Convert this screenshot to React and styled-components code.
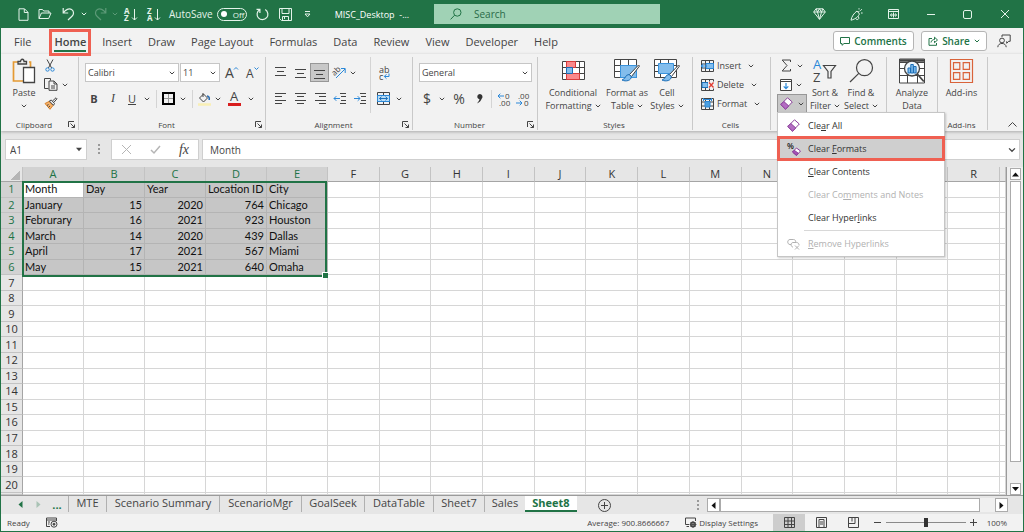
import React from 'react'
import styled, { createGlobalStyle, css } from 'styled-components'

const GREEN = '#217346'
const RED = '#ef6052'
const UI_FONT = '"Open Sans", "Noto Sans", sans-serif'
const CELL_FONT = 'Lato, "Open Sans", sans-serif'

const GlobalStyle = createGlobalStyle`
  * {
    box-sizing: border-box;
  }
  body {
    margin: 0;
    font-family: ${UI_FONT};
    font-size: 11px;
    color: #444;
  }
  button, input, select {
    font: inherit;
    color: inherit;
    margin: 0;
    padding: 0;
    border: 0;
    background: none;
  }
`

const Window = styled.div`
  display: flex;
  flex-direction: column;
  height: 100vh;
  overflow: hidden;
  background: #e6e6e6;
  border: 1px solid ${GREEN};
  border-top: 0;
`

const Svg = styled.svg.attrs(p => ({
  fill: 'none',
  stroke: p.stroke || 'currentColor',
}))`
  display: block;
  flex: none;
  overflow: visible;
  text {
    fill: ${p => p.$ink || 'currentColor'};
    stroke: none;
    font-family: ${UI_FONT};
  }
`

/* ---------- title bar ---------- */

const TitleBar = styled.header`
  display: grid;
  grid-template-columns: 433px 226px 1fr;
  align-items: center;
  height: 28px;
  flex: none;
  background: ${GREEN};
  color: #e4f3ea;
`
const QuickAccess = styled.div`
  display: flex;
  align-items: center;
  padding-left: 10px;
`
const Tool = styled.button`
  display: flex;
  align-items: center;
  justify-content: center;
  flex: none;
  width: ${p => p.$w || 20}px;
  height: 19px;
  line-height: 19px;
  opacity: ${p => (p.$faded ? 0.3 : 1)};
  ${p => p.$pressed && css`
    background: #c8c8c8;
    border: 1px solid #979797;
  `}
`
const AutoSave = styled.label`
  display: flex;
  align-items: center;
  gap: 4px;
  margin-left: 6px;
  font-size: 10px;
`
const Toggle = styled.span`
  display: flex;
  align-items: center;
  gap: 6px;
  width: 30px;
  height: 13px;
  padding-left: 3px;
  border: 1px solid #e4f3ea;
  border-radius: 7px;
  font-size: 8px;
  line-height: 11px;
  input {
    appearance: none;
    width: 6px;
    height: 6px;
    border-radius: 50%;
    background: #fff;
  }
`
const FileName = styled.span`
  margin-left: 12px;
  font-size: 9px;
  color: #fff;
  white-space: pre;
`
const SearchBox = styled.label`
  display: flex;
  align-items: center;
  gap: 12px;
  height: 20px;
  padding-left: 16px;
  background: #a0d2b5;
  color: ${GREEN};
  input {
    flex: 1;
    min-width: 0;
    font-size: 10px;
    outline: 0;
  }
  input::placeholder {
    color: #2a6a48;
    opacity: 1;
  }
`
const WindowControls = styled.div`
  display: flex;
  justify-content: flex-end;
`

/* ---------- tabs ---------- */

const TabBar = styled.nav`
  display: flex;
  align-items: center;
  height: 26px;
  flex: none;
  padding: 0 9px 0 13px;
  background: #f2f2f2;
`
const Tabs = styled.div`
  display: flex;
  gap: 16px;
  flex: 1;
`
const Tab = styled.button`
  position: relative;
  height: 24px;
  font-size: 11px;
  ${p => p.$active && css`
    margin-left: 7px;
    font-weight: 600;
    &::before {
      content: '';
      position: absolute;
      inset: auto 0 1px;
      height: 2px;
      background: ${GREEN};
    }
    &::after {
      content: '';
      position: absolute;
      inset: 0 -5px -3px;
      border: 3px solid ${RED};
      z-index: 2;
    }
  `}
`
const PillButton = styled.button`
  display: flex;
  align-items: center;
  justify-content: center;
  gap: 4px;
  width: ${p => p.$w}px;
  height: 20px;
  margin-right: 7px;
  background: #fff;
  border: 1px solid #b5b5b5;
  border-radius: 3px;
  color: ${GREEN};
  font-size: 10px;
  font-weight: 600;
`

/* ---------- ribbon ---------- */

const Ribbon = styled.section`
  display: grid;
  grid-template-columns: 78px 187px 147px 125px 155px 78px 116px 51px 50px 1fr;
  height: 77px;
  flex: none;
  padding: 3px 0 1px;
  background: #f2f2f2;
  box-shadow: 0 1px 3px #aaa;
`
const Group = styled.div`
  display: flex;
  flex-direction: column;
  min-width: 0;
  border-right: 1px solid #c9c9c9;
`
const GroupBody = styled.div`
  display: flex;
  flex: 1;
  padding: 0 0 0 ${p => p.$pad || 0}px;
`
const GroupLabel = styled.div`
  display: flex;
  align-items: center;
  height: 12px;
  padding-right: 2px;
  font-size: 8px;
  span {
    flex: 1;
    text-align: center;
  }
`
const TwoRows = styled.div`
  display: flex;
  flex-direction: column;
  gap: 7px;
  padding-top: 6px;
`
const ThreeRows = styled.div`
  display: flex;
  flex-direction: column;
  margin-top: -1px;
`
const ToolRow = styled.div`
  display: flex;
  align-items: center;
`
const Line = styled.i`
  flex: none;
  width: 1px;
  height: ${p => p.$h ?? 18}px;
  margin: 0 ${p => p.$gap || 0}px;
  background: #d4d4d4;
`
const BigButton = styled.button`
  display: flex;
  flex-direction: column;
  align-items: center;
  flex: none;
  width: ${p => p.$w}px;
  font-size: 9px;
  line-height: 13px;
  white-space: nowrap;
`
const BigIcon = styled.span`
  display: flex;
  align-items: center;
  justify-content: center;
  height: 27px;
  margin-bottom: 2px;
`
const LabelLine = styled.span`
  display: flex;
  align-items: center;
  gap: 3px;
  min-height: 13px;
`
const WideTool = styled.button`
  display: flex;
  align-items: center;
  gap: 3px;
  height: 19px;
  font-size: 9px;
  svg:last-child {
    margin-left: 4px;
  }
`
const SelectBox = styled.label`
  display: flex;
  align-items: center;
  width: ${p => p.$w}px;
  height: 19px;
  padding: 0 3px 0 2px;
  background: #fff;
  border: 1px solid #c6c6c6;
  select {
    flex: 1;
    min-width: 0;
    appearance: none;
    outline: 0;
    font-size: 9px;
  }
`
const Letter = styled.span`
  font-size: ${p => p.$size || 11}px;
  font-weight: ${p => (p.$bold ? 700 : 400)};
  font-style: ${p => (p.$italic ? 'italic' : 'normal')};
  font-family: ${p => (p.$serif ? '"Liberation Serif", serif' : 'inherit')};
  text-decoration: ${p => (p.$under ? 'underline' : 'none')};
`
const MenuAnchor = styled.div`
  position: relative;
`
const Menu = styled.div`
  position: absolute;
  top: 18px;
  left: 0;
  z-index: 5;
  width: 168px;
  padding: 1px 0;
  background: #fff;
  border: 1px solid #c6c6c6;
  box-shadow: 1px 1px 2px rgba(0, 0, 0, 0.2);
`
const MenuItem = styled.button`
  display: flex;
  align-items: center;
  position: relative;
  width: 100%;
  height: 23px;
  padding-left: 9px;
  font-size: 9px;
  color: #333;
  text-align: left;
  &:disabled {
    color: #b1b1b1;
  }
  ${p => p.$marked && css`
    background: #cfcfcf;
    &::after {
      content: '';
      position: absolute;
      inset: -1px;
      border: 3px solid ${RED};
    }
  `}
`
const MenuIcon = styled.span`
  width: 21px;
`
const MenuRule = styled.hr`
  height: 1px;
  margin: 1px 0 1px 26px;
  border: 0;
  background: #d8d8d8;
`
const Corner = styled.div`
  display: flex;
  align-items: flex-end;
  justify-content: flex-end;
  padding: 0 6px 2px 0;
`

/* ---------- formula bar ---------- */

const FormulaBar = styled.div`
  display: flex;
  gap: 3px;
  height: 36px;
  flex: none;
  padding: 8px 3px 7px 4px;
`
const NameBox = styled.label`
  display: flex;
  align-items: center;
  width: 82px;
  padding: 0 4px;
  background: #fff;
  border: 1px solid #cfcfcf;
  input {
    flex: 1;
    min-width: 0;
    font-size: 10px;
  }
`
const Grip = styled.i`
  width: 2px;
  height: 11px;
  margin: auto ${p => p.$gap}px;
  background: repeating-linear-gradient(#999 0 2px, transparent 2px 4px);
`
const FormulaTools = styled.div`
  display: flex;
  align-items: center;
  width: 88px;
  background: #fff;
  border: 1px solid #cfcfcf;
`
const FormulaInput = styled.label`
  display: flex;
  align-items: center;
  flex: 1;
  padding: 0 3px 0 7px;
  background: #fff;
  border: 1px solid #cfcfcf;
  input {
    flex: 1;
    font-size: 10px;
  }
`

/* ---------- grid ---------- */

const SheetArea = styled.main`
  display: flex;
  flex: 1;
  min-height: 0;
`
const TableWrap = styled.div`
  flex: 1;
  min-width: 0;
  overflow: hidden;
  border-right: 1px solid #9b9b9b;
`
const Table = styled.table`
  width: 100%;
  height: 100%;
  table-layout: fixed;
  border-collapse: separate;
  border-spacing: 0;
  background: #fff;
  th, td {
    padding: 0 2px;
    line-height: 14px;
    white-space: nowrap;
    font-weight: 400;
  }
`
const Col = styled.col`
  width: ${p => (p.$w ? `${p.$w}px` : 'auto')};
`
const HeadRow = styled.tr`
  height: 15px;
`
const LastRow = styled.tr`
  height: 2px;
`
const ColHead = styled.th`
  background: ${p => (p.$on ? '#d2d2d2' : '#e6e6e6')};
  color: ${p => (p.$on ? GREEN : '#333')};
  border-right: 1px solid #c3c3c3;
  border-bottom: 1px solid #a5a5a5;
  font-size: 11px;
`
const AllCorner = styled.th`
  background: linear-gradient(135deg, transparent 50%, #b5b5b5 50%) right 2px bottom 1px / 9px 9px no-repeat #e6e6e6;
  border-right: 1px solid #c3c3c3;
  border-bottom: 1px solid #a5a5a5;
`
const RowHead = styled.th`
  background: ${p => (p.$on ? '#d2d2d2' : '#e6e6e6')};
  color: ${p => (p.$on ? GREEN : '#333')};
  border-right: 1px solid #a5a5a5;
  border-bottom: 1px solid #c3c3c3;
  font-size: 11px;
`
const Cell = styled.td`
  position: ${p => (p.$active ? 'relative' : 'static')};
  border-right: 1px solid ${p => (p.$on ? '#b4b4b4' : '#d6d6d6')};
  border-bottom: 1px solid ${p => (p.$on ? '#b4b4b4' : '#d6d6d6')};
  background: ${p => (p.$on && !p.$active ? '#c6c6c6' : '#fff')};
  color: #111;
  font-family: ${CELL_FONT};
  font-size: 11px;
  text-align: ${p => (p.$num ? 'right' : 'left')};
`
/* five columns by six rows, measured from the active cell; the rest makes up for the cell borders */
const Selection = styled.div`
  position: absolute;
  top: -1px;
  left: -1px;
  width: calc(500% + 5px);
  height: calc(600% + 9px);
  border: 2px solid ${GREEN};
  pointer-events: none;
  &::after {
    content: '';
    position: absolute;
    right: -3px;
    bottom: -3px;
    width: 5px;
    height: 5px;
    background: ${GREEN};
    border: 1px solid #fff;
    border-width: 1px 0 0 1px;
  }
`
const VScroll = styled.div`
  display: flex;
  flex-direction: column;
  width: 16px;
  flex: none;
  padding: 1px 2px 0 3px;
  background: #f0f0f0;
`
const ScrollButton = styled.button`
  display: flex;
  align-items: center;
  justify-content: center;
  flex: none;
  width: ${p => p.$w || 11}px;
  height: ${p => p.$h || 12}px;
  background: #fff;
  border: 1px solid #ababab;
  color: #111;
`
const VThumb = styled.div`
  flex: 1;
  margin: 1px 0 21px;
  background: #fff;
  border: 1px solid #ababab;
`

/* ---------- sheet tabs ---------- */

const SheetBar = styled.div`
  display: flex;
  align-items: flex-start;
  height: 19px;
  flex: none;
  padding-right: 15px;
  border-top: 1px solid #9b9b9b;
`
const SheetNav = styled.div`
  display: flex;
  align-items: center;
  height: 17px;
  width: 67px;
  padding-left: 10px;
  color: ${GREEN};
`
const SheetTab = styled.button`
  width: ${p => p.$w}px;
  height: 16px;
  padding-bottom: 3px;
  line-height: 13px;
  border-left: 1px solid #b0b0b0;
  font-size: 11px;
  white-space: nowrap;
  ${p => p.$active && css`
    padding-bottom: 1px;
    color: ${GREEN};
    font-weight: 700;
    background: #fff;
    border-left: 0;
    border-bottom: 2px solid ${GREEN};
  `}
`
const Spacer = styled.span`
  flex: 1;
`
const HScroll = styled.div`
  display: flex;
  width: 301px;
  margin-top: 2px;
  background: #f0f0f0;
`
const HThumb = styled.div`
  flex: 1;
  margin: 0 15px 0 0;
  background: #fff;
  border: 1px solid #ababab;
`

/* ---------- status bar ---------- */

const StatusBar = styled.footer`
  display: flex;
  align-items: center;
  height: 17px;
  flex: none;
  padding: 0 16px 0 6px;
  background: #f2f2f2;
  font-size: 8px;
`
const Ready = styled.span`
  width: 39px;
`
const Average = styled.span`
  margin-right: 16px;
`
const DisplaySettings = styled.button`
  display: flex;
  align-items: center;
  gap: 2px;
  margin-right: 15px;
`
const ViewButton = styled.button`
  display: flex;
  align-items: center;
  justify-content: center;
  width: 32px;
  height: 17px;
  background: ${p => (p.$on ? '#cdcdcd' : 'transparent')};
`
const Zoom = styled.input`
  appearance: none;
  width: 80px;
  height: 11px;
  background: linear-gradient(#8a8a8a, #8a8a8a) center / 100% 1px no-repeat;
  &::-webkit-slider-thumb {
    appearance: none;
    width: 4px;
    height: 9px;
    background: #333;
  }
`
const ZoomValue = styled.span`
  width: 27px;
  text-align: right;
`

/* ---------- icons ---------- */

const Chevron = ({ size = 6 }) => (
  <Svg width={size} height={size} viewBox="0 0 6 6"><path d="M0.8 1.8 3 4 5.2 1.8" /></Svg>
)
const Triangle = ({ d = 'M0 1h7L3.5 5z', size = 7 }) => (
  <Svg width={size} height={size} viewBox="0 0 7 7"><path d={d} fill="currentColor" stroke="none" /></Svg>
)
const NewFile = () => (
  <Svg width="11" height="13" viewBox="0 0 11 13"><path d="M1 .8h5.5L10 4.3v8H1zM6.3 1v3.5H10" /></Svg>
)
const OpenFolder = () => (
  <Svg width="14" height="12" viewBox="0 0 14 12"><path d="M1 10.5v-9h3.5L5.7 3H11v2M1 10.5 3.4 5H13l-2.3 5.5z" /></Svg>
)
const Undo = () => (
  <Svg width="13" height="14" viewBox="0 0 13 14" strokeWidth="1.2"><path d="M1.2 1v5h5M1.4 5.8C3.5 2.5 7 1 9.6 2.6c2.7 1.8 2.3 4.8.4 6.600L6 13" /></Svg>
)
const Redo = () => (
  <Svg width="13" height="14" viewBox="0 0 13 14" strokeWidth="1.2"><path d="M11.8 1v5h-5M11.6 5.8C9.5 2.5 6 1 3.4 2.6.7 4.4 1.1 7.4 3 9.2L7 13" /></Svg>
)
const SortArrow = ({ a, b }) => (
  <Svg width="14" height="15" viewBox="0 0 14 15">
    <text x="0" y="7" fontSize="8" fontWeight="700">{a}</text>
    <text x="0" y="14" fontSize="8" fontWeight="700">{b}</text>
    <path d="M10.5 2v11M8 10.5l2.5 2.5 2.5-2.5" />
  </Svg>
)
const Refresh = () => (
  <Svg width="13" height="14" viewBox="0 0 13 14" strokeWidth="1.2"><path d="M9.2 2.6A5.4 5.4 0 1 1 3.6 2.7M3.9 6V2.3H.5" /></Svg>
)
const Save = () => (
  <Svg width="13" height="13" viewBox="0 0 13 13"><path d="M.5.5h12v12h-10l-2-2zM3 1v4.500h7V1M3.500 12.500v-4h6v4M5.500 9v2" /></Svg>
)
const Customize = () => (
  <Svg width="7" height="7" viewBox="0 0 7 7"><path d="M1 .5h5M1 3h5L3.5 5.8z" /></Svg>
)
const Magnifier = () => (
  <Svg width="12" height="12" viewBox="0 0 12 12"><circle cx="7.3" cy="4.5" r="3.7" /><path d="m4.600 7.200-4 4.200" /></Svg>
)
const Diamond = () => (
  <Svg width="13" height="12" viewBox="0 0 13 12"><path d="M3 .8h7L12.3 4l-5.800 7.300L.7 4zM.7 4h11.600M3 .8 4.5 4l2 7.300 2-7.300L10 .8M4.500 4l2-3.200 2 3.200" /></Svg>
)
const Megaphone = () => (
  <Svg width="13" height="13" viewBox="0 0 13 13"><path d="M1 12.200c.5-3.500 3-7 6-9.200l2.500 3C8.500 8 6 11 1 12.200zM5.500 10.200c.8 2 2.800 1.600 3.300.2l-.3-2M9 1.500V.2M10.300 2.800l1.500-1.600M11 5h1.600M8 4.200l1.500-1" /></Svg>
)
const RibbonMode = () => (
  <Svg width="11" height="10" viewBox="0 0 11 10"><path d="M.5.5h10v9H.5zM.5 2.500h10M5.500 3.500v5M2.500 6h6M4 4.500 2.300 6 4 7.500M7 4.500 8.700 6 7 7.500" /></Svg>
)
const CommentIcon = () => (
  <Svg width="10" height="9" viewBox="0 0 10 9"><path d="M.5.5h9v6H4L2 8.300V6.500H.5z" /></Svg>
)
const ShareIcon = () => (
  <Svg width="10" height="10" viewBox="0 0 10 10"><path d="M4 2.500H1v6.800h7.500V7M3 6.500c.3-2.200 2-3 3.500-3V1.200L9.500 4l-3 2.700V4.900" /></Svg>
)
const PersonChat = () => (
  <Svg width="14" height="14" viewBox="0 0 14 14"><circle cx="5" cy="6.5" r="2.4" /><path d="M.8 13.200c0-5 8.400-5 8.400 0M5 3V1h8.200v6.300h-1.500l-2 2V7.300" /></Svg>
)
const PasteIcon = () => (
  <Svg width="24" height="26" viewBox="0 0 24 26" strokeWidth="1.3">
    <path d="M7 4H1.500v19H11M17 4h1.500v5" stroke="#e59a33" strokeWidth="1.7" />
    <path d="M6 6V3.500h2.500c0-3 3.500-3 3.500 0h2.500V6z" fill="#f2f2f2" />
    <path d="M11.500 9.500h11v15h-11z" fill="#fff" />
  </Svg>
)
const Cut = () => (
  <Svg width="10" height="13" viewBox="0 0 10 13"><path d="M2 .5 6.600 9M8 .5 3.400 9" /><g stroke="#2b88d8"><circle cx="2.5" cy="10.5" r="1.7" /><circle cx="7.5" cy="10.5" r="1.7" /></g></Svg>
)
const Copy = () => (
  <Svg width="14" height="13" viewBox="0 0 14 13"><path d="M4.500 10.500h-4V.5h6v2" /><path d="M5 3h5l3 3v6.300H5zM10 3v3h3M7 8h4M7 10h4" fill="#f2f2f2" /></Svg>
)
const Painter = () => (
  <Svg width="14" height="13" viewBox="0 0 14 13"><path d="m1 6.500 5 5.800 3-3.800-4-4z" fill="#f6b26b" stroke="#d9822b" /><path d="m5.300 4 4.200 4.300 1-1.800L7.300 3zM8.500 4 12 .8l1 1-3.200 3.600M3 8.500l1.500-1M4.500 10.300 6 9" /></Svg>
)
const BordersIcon = () => (
  <Svg width="13" height="13" viewBox="0 0 13 13"><path d="M1 1h11v11H1z" stroke="#000" strokeWidth="2" /><path d="M6.500 2v9M2 6.500h9" stroke="#999" /></Svg>
)
const Bucket = () => (
  <Svg width="13" height="14" viewBox="0 0 13 14"><path d="m1.500 6 4-4 4 4-4 4zM5 1v4" /><path d="M9 4c2 0 2.500 1.500 2.200 4" stroke="#2b6cb0" strokeWidth="1.6" /><path d="M0 12.500h13" stroke="#f9efb5" strokeWidth="2.5" /></Svg>
)
const FontColor = () => (
  <Svg width="13" height="15" viewBox="0 0 13 15"><text x="2" y="10" fontSize="13">A</text><path d="M0 13.500h13" stroke="#d81e1e" strokeWidth="3" /></Svg>
)
const GrowFont = ({ up }) => (
  <Svg width="13" height="13" viewBox="0 0 13 13"><text x="0" y="12" fontSize={up ? 14 : 12}>A</text><path d={up ? 'm9 3.500 2-2 2 2' : 'm8.500 1.500 2 2 2-2'} stroke="#2b88d8" /></Svg>
)
const LinesIcon = ({ lines, arrow }) => (
  <Svg width="13" height="13" viewBox="0 0 13 13">
    {lines.map(([x1, x2, y]) => <path key={y} d={`M${x1} ${y}.5H${x2}`} />)}
    {arrow && <path d={arrow} stroke="#2b88d8" />}
  </Svg>
)
const Orientation = () => (
  <Svg width="14" height="13" viewBox="0 0 14 13"><text x="0" y="8" fontSize="8" transform="rotate(-45 4 6)">ab</text><path d="m4 12 9-9M9 2.500h4.200V7" stroke="#2b88d8" /></Svg>
)
const WrapText = () => (
  <Svg width="12" height="14" viewBox="0 0 12 14"><text x="1" y="6.5" fontSize="9">ab</text><text x="1" y="13.5" fontSize="9">c</text><path d="M11 7.500v3H6.500M8.500 8.200l-2.200 2.300 2.200 2.200" stroke="#2b88d8" /></Svg>
)
const MergeIcon = () => (
  <Svg width="13" height="13" viewBox="0 0 13 13"><path d="M.5.5h12v12H.5zM6.500 1v2M6.500 10v2" /><path d="M.5 3.500h12v6H.5z" fill="#b9dcf5" stroke="#2b88d8" /><path d="M2.500 6.500h8M4.500 4.700l-2 1.800 2 1.800M8.500 4.700l2 1.800-2 1.800" stroke="#1b6fb8" /></Svg>
)
const DecimalIcon = ({ inc }) => (
  <Svg width="14" height="14" viewBox="0 0 14 14">
    <text x={inc ? 8 : 2} y="6.5" fontSize="8">{inc ? '0' : '.00'}</text>
    <text x={inc ? 2 : 8} y="13.5" fontSize="8">{inc ? '.00' : '0'}</text>
    <path d={inc ? 'M7 4H1M3.300 1.700 1 4l2.300 2.300' : 'M0 11h6M3.700 8.700 6 11l-2.300 2.300'} stroke="#2b88d8" />
  </Svg>
)
const CondFormat = () => (
  <Svg width="23" height="19" viewBox="0 0 23 19">
    <path d="M.5.5h22v18H.5zM.5 6.500h22M.5 12.500h22M4.500.5v18M17.500.5v18" fill="#fff" />
    <path d="M4.500.5h9v6h-9zM4.500 12.500h13v6h-13z" fill="#f9898c" stroke="#d83b3b" />
    <path d="M4.500 6.500h6v6h-6z" fill="#83bdec" stroke="#1b6fb8" />
  </Svg>
)
const TableBrush = ({ cell }) => (
  <Svg width="26" height="23" viewBox="0 0 26 23">
    <path d="M.5.5h22v18H.5zM.5 6.500h22M.5 12.500h22M6.500.5v18M14.500.5v18" fill="#fff" />
    <path d={cell ? 'M4.500 4.500h15v10h-15z' : 'M6.500 6.500h16v12h-16z'} fill="#83bdec" stroke="#3a93dc" />
    <path d="m24.500 6-9 9.500 2 2 8-10.500z" fill="#fff" />
    <path d="M15 15.500c-4 0-3 4.500-7 5.500 4 2 9.500.5 9.300-3.500z" fill="#83bdec" stroke="#1b6fb8" />
  </Svg>
)
const CellsIcon = ({ kind }) => (
  <Svg width="13" height="12" viewBox="0 0 13 12">
    <path d="M.5.5h12v11H.5zM.5 4h12M.5 8h12M4.500.5v11M8.500.5v11" />
    {kind === 'insert' && <path d="M5 3.500h7.500v5H5zM6 6H0M2.300 3.800 0 6l2.300 2.200" fill="#83bdec" stroke="#2b88d8" />}
    {kind === 'delete' && <><path d="M1 3.500h6v5H1z" fill="#83bdec" stroke="#1b6fb8" /><path d="M7 2.500h6v7H7z" fill="#f2f2f2" stroke="none" /><path d="m8 3.500 4.500 5m0-5L8 8.500" stroke="#e03c31" strokeWidth="1.3" /></>}
    {kind === 'format' && <path d="M4 3.500h5V9H4zM2.500 1.500h8M2.500 0v3M10.500 0v3" fill="#4c9fe0" stroke="#2b88d8" />}
  </Svg>
)
const SigmaIcon = () => (
  <Svg width="11" height="13" viewBox="0 0 11 13"><path d="M9.500 3V1H1.200L6 6.500 1.200 12h8.300v-2" /></Svg>
)
const FillDown = () => (
  <Svg width="12" height="12" viewBox="0 0 12 12"><path d="M.5.5h11v11H.5zM.5 2.500h11" fill="#fff" /><path d="M6 4v5.500M3.700 7.300 6 9.600l2.300-2.300" stroke="#2b88d8" strokeWidth="1.2" /></Svg>
)
const Eraser = ({ size = 13 }) => (
  <Svg width={size} height={size} viewBox="0 0 13 13" stroke="#8b3f9b"><path d="M.8 7.500 7.500.8 12.300 5l-6.800 7.200z" fill="#fff" /><path d="m3.800 4.500 5 4.500-3.300 3.200L.8 7.500z" fill="#b36cc2" /></Svg>
)
const FormatEraser = () => (
  <Svg width="14" height="14" viewBox="0 0 14 14" $ink="#222"><text x="0" y="7" fontSize="8" fontWeight="600">%</text><path d="m5.500 10 4-4 4 3-4 4.500z" fill="#fff" stroke="#8b3f9b" /><path d="m7.200 8.200 4 3-1.700 2.300-4-3.500z" fill="#a44fb5" stroke="#8b3f9b" /></Svg>
)
const LinkRemove = () => (
  <Svg width="13" height="12" viewBox="0 0 13 12"><path d="M4 6.500H3c-3 0-3-5 0-5h3.500c2 0 2.700 2 2 3.500M6 9C3.500 9 3.500 4.500 6 4.500h3.500C11.500 4.500 12 6 12 7M8 7.500l4 4m0-4-4 4" /></Svg>
)
const BlueText = styled.text`
  && {
    fill: #2b88d8;
  }
`
const SortFilter = () => (
  <Svg width="24" height="24" viewBox="0 0 24 24"><BlueText x="0" y="10" fontSize="13">A</BlueText><text x="0" y="23" fontSize="13">Z</text><path d="M10.500 6.500h12l-4.500 6V19h-3v-6.500z" strokeWidth="1.2" /></Svg>
)
const FindIcon = () => (
  <Svg width="25" height="24" viewBox="0 0 25 24" strokeWidth="1.2"><circle cx="15.5" cy="8.7" r="8" /><path d="M9.800 14.400 1 23" /></Svg>
)
const AnalyzeIcon = () => (
  <Svg width="26" height="26" viewBox="0 0 26 26">
    <path d="M.5 1h25v24H.5zM.5 4.500h25M.5 10.500h25M.5 17.500h25M8.500 4v21M18.500 4v21" fill="#fff" />
    <path d="M1 2.500h24" strokeWidth="2.5" />
    <circle cx="13" cy="10.5" r="7.5" fill="#eef6fc" strokeWidth="1.3" />
    <path d="m18.300 16 6.500 7.500" strokeWidth="1.8" />
    <path d="M9 10h2.500v5H9zM11.800 6.500h2.500V15h-2.500zM14.600 8.500h2.500V15h-2.500z" fill="#83bdec" stroke="#1b6fb8" />
  </Svg>
)
const AddinsIcon = () => (
  <Svg width="23" height="24" viewBox="0 0 23 24" stroke="#d9633a" strokeWidth="1.2"><path d="M.5.5h22v23H.5zM3.500 3.700h6.300v6.600H3.500zM13.200 3.700h6.300v6.600h-6.300zM3.500 13.700h6.300v6.600H3.500zM13.200 13.700h6.300v6.600h-6.300z" /></Svg>
)
const Launcher = () => (
  <Svg width="7" height="7" viewBox="0 0 7 7"><path d="M.5 6V.5H6M2.500 2.500l4 4M6.500 3.500v3h-3" /></Svg>
)
const MacroIcon = () => (
  <Svg width="12" height="11" viewBox="0 0 12 11"><path d="M4 9.500H.5V1h10v3M.5 3h10M2 5h2M2 7h1.500" /><circle cx="8" cy="7.2" r="3" /><circle cx="8" cy="7.2" r="1" fill="currentColor" /></Svg>
)
const DisplayIcon = () => (
  <Svg width="12" height="11" viewBox="0 0 12 11"><path d="M4 7.500H.5V1h10v3M1.500 9.500H4" /><circle cx="8" cy="7.5" r="2.2" strokeWidth="1.6" /><path d="M8 4v7M4.500 7.500h7M5.500 5l5 5M10.500 5l-5 5" strokeWidth=".8" /></Svg>
)

const ALIGN_ROWS = {
  top: [[1, 12, 1], [3, 10, 5], [1, 12, 9]],
  middle: [[1, 12, 3], [3, 10, 7], [1, 12, 11]],
  bottom: [[1, 12, 4], [3, 10, 8], [1, 12, 12]],
  left: [[1, 12, 1], [1, 8, 4], [1, 12, 8], [1, 8, 11]],
  center: [[1, 12, 1], [3, 10, 4], [1, 12, 8], [3, 10, 11]],
  right: [[1, 12, 1], [5, 12, 4], [1, 12, 8], [5, 12, 11]],
  indent: [[6, 12, 1], [7, 12, 4], [7, 12, 8], [6, 12, 11]],
}

/* ---------- data ---------- */

const COLUMNS = ['A', 'B', 'C', 'D', 'E', 'F', 'G', 'H', 'I', 'J', 'K', 'L', 'M', 'N', '', '', '', 'R']
const DATA = [
  ['Month', 'Day', 'Year', 'Location ID', 'City'],
  ['January', 15, 2020, 764, 'Chicago'],
  ['Februrary', 16, 2021, 923, 'Houston'],
  ['March', 14, 2020, 439, 'Dallas'],
  ['April', 17, 2021, 567, 'Miami'],
  ['May', 15, 2021, 640, 'Omaha'],
]
const ROWS = Array.from({ length: 20 }, (_, i) => i)
const TABS = ['File', 'Home', 'Insert', 'Draw', 'Page Layout', 'Formulas', 'Data', 'Review', 'View', 'Developer', 'Help']
const SHEETS = [['MTE', 38], ['Scenario Summary', 113], ['ScenarioMgr', 82], ['GoalSeek', 63], ['DataTable', 69], ['Sheet7', 51], ['Sales', 41]]

const Drop = ({ w = 10, label }) => <Tool $w={w} aria-label={label}><Chevron /></Tool>

const Label = ({ children, launcher }) => (
  <GroupLabel><span>{children}</span>{launcher && <Tool $w={9} aria-label={`${children} settings`}><Launcher /></Tool>}</GroupLabel>
)

const TopBar = () => (
  <TitleBar>
    <QuickAccess>
      <Tool $w={24} aria-label="New"><NewFile /></Tool>
      <Tool aria-label="Open"><OpenFolder /></Tool>
      <Tool $w={26} aria-label="Undo"><Undo /></Tool>
      <Drop label="Undo list" w={6} />
      <Tool $w={26} $faded aria-label="Redo"><Redo /></Tool>
      <Tool $w={4} $faded aria-label="Redo list"><Chevron /></Tool>
      <Tool $w={28} aria-label="Sort ascending"><SortArrow a="A" b="Z" /></Tool>
      <Tool $w={18} aria-label="Sort descending"><SortArrow a="Z" b="A" /></Tool>
      <AutoSave>AutoSave<Toggle><input type="checkbox" />Off</Toggle></AutoSave>
      <Tool $w={32} aria-label="Refresh"><Refresh /></Tool>
      <Tool $w={14} aria-label="Save"><Save /></Tool>
      <Tool $w={30} aria-label="Customize"><Customize /></Tool>
      <FileName>MISC_Desktop  -...</FileName>
    </QuickAccess>
    <SearchBox><Magnifier /><input placeholder="Search" aria-label="Search" /></SearchBox>
    <WindowControls>
      <Tool $w={38} aria-label="Premium"><Diamond /></Tool>
      <Tool $w={36} aria-label="What's new"><Megaphone /></Tool>
      <Tool $w={38} aria-label="Ribbon display"><RibbonMode /></Tool>
      <Tool $w={37} aria-label="Minimize"><Svg width="8" height="8"><path d="M0 4.500h8" /></Svg></Tool>
      <Tool $w={37} aria-label="Maximize"><Svg width="9" height="9"><rect x=".5" y=".5" width="8" height="8" rx="1.5" /></Svg></Tool>
      <Tool $w={37} aria-label="Close"><Svg width="8" height="8"><path d="m0 0 8 8M8 0 0 8" /></Svg></Tool>
    </WindowControls>
  </TitleBar>
)

const ClearMenu = () => (
  <Menu role="menu">
    <MenuItem role="menuitem"><MenuIcon><Eraser /></MenuIcon><span>Cle<u>a</u>r All</span></MenuItem>
    <MenuItem role="menuitem" $marked><MenuIcon><FormatEraser /></MenuIcon><span>Clear <u>F</u>ormats</span></MenuItem>
    <MenuItem role="menuitem"><MenuIcon /><span><u>C</u>lear Contents</span></MenuItem>
    <MenuItem role="menuitem" disabled><MenuIcon /><span>Clear Co<u>m</u>ments and Notes</span></MenuItem>
    <MenuItem role="menuitem"><MenuIcon /><span>Clear Hyper<u>l</u>inks</span></MenuItem>
    <MenuRule />
    <MenuItem role="menuitem" disabled><MenuIcon><LinkRemove /></MenuIcon><span><u>R</u>emove Hyperlinks</span></MenuItem>
  </Menu>
)

const HomeRibbon = () => (
  <Ribbon>
    <Group>
      <GroupBody $pad={4}>
        <BigButton $w={38}>
          <BigIcon><PasteIcon /></BigIcon>
          <LabelLine>Paste</LabelLine>
          <LabelLine><Chevron /></LabelLine>
        </BigButton>
        <ThreeRows>
          <ToolRow><Tool $w={14} aria-label="Cut"><Cut /></Tool></ToolRow>
          <ToolRow><Tool $w={16} aria-label="Copy"><Copy /></Tool><Drop label="Copy options" w={12} /></ToolRow>
          <ToolRow><Tool $w={16} aria-label="Format Painter"><Painter /></Tool></ToolRow>
        </ThreeRows>
      </GroupBody>
      <Label launcher>Clipboard</Label>
    </Group>

    <Group>
      <GroupBody $pad={6}>
        <TwoRows>
          <ToolRow>
            <SelectBox $w={94}><select aria-label="Font"><option>Calibri</option></select><Chevron /></SelectBox>
            <Line $h={0} />
            <SelectBox $w={40}><select aria-label="Font size"><option>11</option></select><Chevron /></SelectBox>
            <Tool $w={22} aria-label="Increase font size"><GrowFont up /></Tool>
            <Tool aria-label="Decrease font size"><GrowFont /></Tool>
          </ToolRow>
          <ToolRow>
            <Tool $w={18}><Letter $bold>B</Letter></Tool>
            <Tool><Letter $italic $serif $size={12}>I</Letter></Tool>
            <Tool $w={18}><Letter $under>U</Letter></Tool>
            <Drop label="Underline options" w={12} />
            <Line $gap={3} />
            <Tool $w={16} aria-label="Borders"><BordersIcon /></Tool>
            <Drop label="Border options" w={14} />
            <Line $gap={2} />
            <Tool $w={18} aria-label="Fill color"><Bucket /></Tool>
            <Drop label="Fill options" />
            <Tool $w={23} aria-label="Font color"><FontColor /></Tool>
            <Drop label="Font color options" />
          </ToolRow>
        </TwoRows>
      </GroupBody>
      <Label launcher>Font</Label>
    </Group>

    <Group>
      <GroupBody $pad={4}>
        <TwoRows>
          <ToolRow>
            <Tool aria-label="Top align"><LinesIcon lines={ALIGN_ROWS.top} /></Tool>
            <Tool aria-label="Middle align"><LinesIcon lines={ALIGN_ROWS.middle} /></Tool>
            <Tool $w={19} $pressed aria-label="Bottom align"><LinesIcon lines={ALIGN_ROWS.bottom} /></Tool>
            <Tool aria-label="Orientation"><Orientation /></Tool>
            <Drop label="Orientation options" w={8} />
          </ToolRow>
          <ToolRow>
            <Tool aria-label="Align left"><LinesIcon lines={ALIGN_ROWS.left} /></Tool>
            <Tool aria-label="Center"><LinesIcon lines={ALIGN_ROWS.center} /></Tool>
            <Tool aria-label="Align right"><LinesIcon lines={ALIGN_ROWS.right} /></Tool>
            <Tool aria-label="Decrease indent"><LinesIcon lines={ALIGN_ROWS.indent} arrow="M6 6.500H0M2.300 4.200 0 6.500l2.300 2.300" /></Tool>
            <Tool aria-label="Increase indent"><LinesIcon lines={ALIGN_ROWS.indent} arrow="M0 6.500h6M3.700 4.200 6 6.500 3.700 8.800" /></Tool>
          </ToolRow>
        </TwoRows>
        <Line $h={56} />
        <TwoRows>
          <ToolRow><Tool $w={26} aria-label="Wrap text"><WrapText /></Tool></ToolRow>
          <ToolRow><Tool $w={24} aria-label="Merge"><MergeIcon /></Tool><Drop label="Merge options" w={8} /></ToolRow>
        </TwoRows>
      </GroupBody>
      <Label launcher>Alignment</Label>
    </Group>

    <Group>
      <GroupBody $pad={6}>
        <TwoRows>
          <ToolRow>
            <SelectBox $w={113}><select aria-label="Number format"><option>General</option></select><Chevron /></SelectBox>
          </ToolRow>
          <ToolRow>
            <Tool $w={16}><Letter $size={14}>$</Letter></Tool>
            <Drop label="Currency options" w={14} />
            <Tool><Letter $size={14}>%</Letter></Tool>
            <Tool aria-label="Comma style"><Svg width="7" height="11" viewBox="0 0 7 11"><path d="M1 10.500c2.500-1 4-2.800 4.800-5A2.600 2.600 0 1 0 3.500 6.300C3 8 2 9.500 1 10.500z" fill="#333" stroke="none" /></Svg></Tool>
            <Line $gap={2} />
            <Tool aria-label="Increase decimal"><DecimalIcon inc /></Tool>
            <Tool $w={18} aria-label="Decrease decimal"><DecimalIcon /></Tool>
          </ToolRow>
        </TwoRows>
      </GroupBody>
      <Label launcher>Number</Label>
    </Group>

    <Group>
      <GroupBody $pad={3}>
        <BigButton $w={64}>
          <BigIcon><CondFormat /></BigIcon>
          <LabelLine>Conditional</LabelLine>
          <LabelLine>Formatting <Chevron /></LabelLine>
        </BigButton>
        <BigButton $w={44}>
          <BigIcon><TableBrush /></BigIcon>
          <LabelLine>Format as</LabelLine>
          <LabelLine>Table <Chevron /></LabelLine>
        </BigButton>
        <BigButton $w={36}>
          <BigIcon><TableBrush cell /></BigIcon>
          <LabelLine>Cell</LabelLine>
          <LabelLine>Styles <Chevron /></LabelLine>
        </BigButton>
      </GroupBody>
      <Label>Styles</Label>
    </Group>

    <Group>
      <GroupBody $pad={8}>
        <ThreeRows>
          <WideTool><CellsIcon kind="insert" />Insert<Chevron /></WideTool>
          <WideTool><CellsIcon kind="delete" />Delete<Chevron /></WideTool>
          <WideTool><CellsIcon kind="format" />Format<Chevron /></WideTool>
        </ThreeRows>
      </GroupBody>
      <Label>Cells</Label>
    </Group>

    <Group>
      <GroupBody $pad={6}>
        <ThreeRows>
          <ToolRow><Tool $w={18} aria-label="AutoSum"><SigmaIcon /></Tool><Drop label="Sum options" /></ToolRow>
          <ToolRow><Tool $w={17} aria-label="Fill"><FillDown /></Tool><Drop label="Fill list" /></ToolRow>
          <MenuAnchor>
            <Tool $w={30} $pressed aria-label="Clear" aria-haspopup="menu" aria-expanded="true">
              <Eraser /><Line $h={0} $gap={2} /><Chevron />
            </Tool>
            <ClearMenu />
          </MenuAnchor>
        </ThreeRows>
        <BigButton $w={36}>
          <BigIcon><SortFilter /></BigIcon>
          <LabelLine>Sort &amp;</LabelLine>
          <LabelLine>Filter <Chevron /></LabelLine>
        </BigButton>
        <BigButton $w={36}>
          <BigIcon><FindIcon /></BigIcon>
          <LabelLine>Find &amp;</LabelLine>
          <LabelLine>Select <Chevron /></LabelLine>
        </BigButton>
      </GroupBody>
    </Group>

    <Group>
      <GroupBody>
        <BigButton $w={50}>
          <BigIcon><AnalyzeIcon /></BigIcon>
          <LabelLine>Analyze</LabelLine>
          <LabelLine>Data</LabelLine>
        </BigButton>
      </GroupBody>
    </Group>

    <Group>
      <GroupBody>
        <BigButton $w={47}>
          <BigIcon><AddinsIcon /></BigIcon>
          <LabelLine>Add-ins</LabelLine>
        </BigButton>
      </GroupBody>
      <Label>Add-ins</Label>
    </Group>

    <Corner>
      <button aria-label="Collapse ribbon"><Svg width="9" height="7"><path d="m.5 5.500 4-4 4 4" /></Svg></button>
    </Corner>
  </Ribbon>
)

const Sheet = () => (
  <SheetArea>
    <TableWrap>
      <Table>
        <colgroup>
          <Col $w={22} />
          {COLUMNS.map((c, i) => <Col key={i} $w={i < 5 ? 61 : 0} />)}
          <Col $w={6} />
        </colgroup>
        <thead>
          <HeadRow>
            <AllCorner />
            {COLUMNS.map((c, i) => <ColHead key={i} $on={i < 5}>{c}</ColHead>)}
            <ColHead />
          </HeadRow>
        </thead>
        <tbody>
          {ROWS.map(r => (
            <tr key={r}>
              <RowHead $on={r < 6}>{r + 1}</RowHead>
              {COLUMNS.map((c, i) => {
                const value = DATA[r]?.[i]
                const active = r === 0 && i === 0
                return (
                  <Cell key={i} $on={r < 6 && i < 5} $active={active} $num={typeof value === 'number'}>
                    {value}
                    {active && <Selection />}
                  </Cell>
                )
              })}
              <Cell />
            </tr>
          ))}
          <LastRow>
            <RowHead />
            {COLUMNS.map((c, i) => <Cell key={i} />)}
            <Cell />
          </LastRow>
        </tbody>
      </Table>
    </TableWrap>
    <VScroll>
      <ScrollButton aria-label="Scroll up"><Triangle d="M0 5.500h7l-3.500-4z" /></ScrollButton>
      <VThumb />
      <ScrollButton aria-label="Scroll down"><Triangle /></ScrollButton>
    </VScroll>
  </SheetArea>
)

const App = () => {
  return (
    <Window>
      <GlobalStyle />
      <TopBar />
      <TabBar>
        <Tabs>
          {TABS.map(t => <Tab key={t} $active={t === 'Home'}>{t}</Tab>)}
        </Tabs>
        <PillButton $w={81}><CommentIcon />Comments</PillButton>
        <PillButton $w={66}><ShareIcon />Share<Chevron /></PillButton>
        <Tool aria-label="Feedback"><PersonChat /></Tool>
      </TabBar>
      <HomeRibbon />
      <FormulaBar>
        <NameBox><input defaultValue="A1" aria-label="Name box" /><Triangle size={6} /></NameBox>
        <Grip $gap={8} />
        <FormulaTools>
          <Tool $w={28} aria-label="Cancel"><Svg width="9" height="9" stroke="#b5b5b5"><path d="m0 0 9 9M9 0 0 9" /></Svg></Tool>
          <Tool $w={30} aria-label="Enter"><Svg width="11" height="9" stroke="#b5b5b5" strokeWidth="1.5"><path d="m1 5 3 3 6-7" /></Svg></Tool>
          <Tool $w={28}><Letter $italic $serif $size={14}>fx</Letter></Tool>
        </FormulaTools>
        <FormulaInput><input defaultValue="Month" aria-label="Formula" /><Chevron size={8} /></FormulaInput>
      </FormulaBar>
      <Sheet />
      <SheetBar>
        <SheetNav>
          <Tool $w={18} aria-label="Previous sheet"><Triangle d="M5.500 0v7l-4-3.500z" /></Tool>
          <Tool $w={18} $faded aria-label="Next sheet"><Triangle d="M1.500 0v7l4-3.500z" /></Tool>
          <Tool $w={20}><Letter $bold>...</Letter></Tool>
        </SheetNav>
        {SHEETS.map(([name, w]) => <SheetTab key={name} $w={w}>{name}</SheetTab>)}
        <SheetTab $w={52} $active>Sheet8</SheetTab>
        <Tool $w={54} aria-label="New sheet"><Svg width="13" height="13"><circle cx="6.5" cy="6.5" r="6" /><path d="M6.500 3v7M3 6.500h7" /></Svg></Tool>
        <Spacer />
        <Grip $gap={8} />
        <HScroll>
          <ScrollButton $w={13} $h={14} aria-label="Scroll left"><Triangle d="M5.500 0v7l-4-3.500z" /></ScrollButton>
          <HThumb />
          <ScrollButton $w={13} $h={14} aria-label="Scroll right"><Triangle d="M1.500 0v7l4-3.500z" /></ScrollButton>
        </HScroll>
      </SheetBar>
      <StatusBar>
        <Ready>Ready</Ready>
        <MacroIcon />
        <Spacer />
        <Average>Average: 900.8666667</Average>
        <DisplaySettings><DisplayIcon />Display Settings</DisplaySettings>
        <ViewButton $on aria-label="Normal view"><Svg width="11" height="11"><path d="M.5.5h10v10H.5zM4 .5v10M7.500.5v10M.5 4h10M.5 7.500h10" /></Svg></ViewButton>
        <ViewButton aria-label="Page layout view"><Svg width="11" height="11"><path d="M.5.5h10v10H.5zM3 2.500h5v8H3zM4 5h3M4 7h3" /></Svg></ViewButton>
        <ViewButton aria-label="Page break view"><Svg width="11" height="11"><path d="M.5.5h10v10H.5zM.5 6.500H7v-6M4 .5v4" /></Svg></ViewButton>
        <Tool $w={17} aria-label="Zoom out"><Svg width="7" height="7"><path d="M0 3.500h7" /></Svg></Tool>
        <Zoom type="range" defaultValue="50" aria-label="Zoom" />
        <Tool $w={14} aria-label="Zoom in"><Svg width="7" height="7"><path d="M0 3.500h7M3.500 0v7" /></Svg></Tool>
        <ZoomValue>100%</ZoomValue>
      </StatusBar>
    </Window>
  )
}

export default App
